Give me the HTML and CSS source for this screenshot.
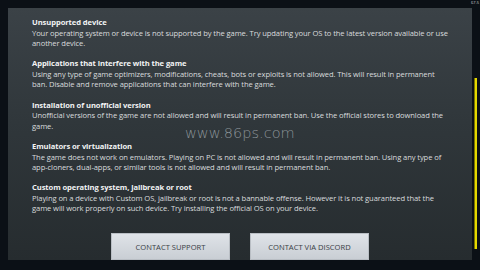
FILE: index.html
```html
<!DOCTYPE html>
<html>
<head>
<meta charset="utf-8">
<link rel="stylesheet" href="styles.css">
</head>
<body>
<div class="screen">
  <div class="corner">67.5</div>
  <div class="panel">
    <div class="content">
      <section class="item">
        <h3>Unsupported device</h3>
        <p>Your operating system or device is not supported by the game. Try updating your OS to the latest version available or use another device.</p>
      </section>
      <section class="item">
        <h3>Applications that interfere with the game</h3>
        <p>Using any type of game optimizers, modifications, cheats, bots or exploits is not allowed. This will result in permanent ban. Disable and remove applications that can interfere with the game.</p>
      </section>
      <section class="item">
        <h3>Installation of unofficial version</h3>
        <p>Unofficial versions of the game are not allowed and will result in permanent ban. Use the official stores to download the game.</p>
      </section>
      <section class="item">
        <h3>Emulators or virtualization</h3>
        <p>The game does not work on emulators. Playing on PC is not allowed and will result in permanent ban. Using any type of app-cloners, dual-apps, or similar tools is not allowed and will result in permanent ban.</p>
      </section>
      <section class="item">
        <h3>Custom operating system, jailbreak or root</h3>
        <p>Playing on a device with Custom OS, jailbreak or root is not a bannable offense. However it is not guaranteed that the game will work properly on such device. Try installing the official OS on your device.</p>
      </section>
    </div>
    <div class="actions">
      <button class="btn">CONTACT SUPPORT</button>
      <button class="btn">CONTACT VIA DISCORD</button>
    </div>
    <div class="watermark">www.86ps.com</div>
  </div>
  <div class="scrollbar"><div class="thumb"></div></div>
</div>
</body>
</html>
```
FILE: styles.css
```css
* { box-sizing: border-box; }
html, body { margin: 0; padding: 0; }
body {
  width: 480px;
  height: 270px;
  overflow: hidden;
  background: #0b1016;
  font-family: "Open Sans", "Noto Sans", sans-serif;
}
.screen {
  position: relative;
  width: 480px;
  height: 270px;
  padding: 8px 8px 10px 8px;
  display: flex;
}
.corner {
  position: absolute;
  right: 1px;
  top: 0;
  font-size: 4px;
  color: #c8ccd0;
  line-height: 6px;
}
.panel {
  position: relative;
  flex: 1;
  display: flex;
  flex-direction: column;
  background: linear-gradient(180deg, #3b4247 0%, #30373b 45%, #262c2f 100%);
  padding: 9px 24px 0 24px;
}
.content { flex: 1; }
.item { margin: 0 0 10px 0; }
.item h3 {
  margin: 0 0 0.5px 0;
  font-size: 7.6px;
  line-height: 10.25px;
  font-weight: 700;
  color: #f2f3f4;
  letter-spacing: -0.08px;
}
.item p {
  margin: 0;
  font-size: 7.6px;
  line-height: 10.25px;
  color: #d9dcde;
  letter-spacing: -0.1px;
}
.actions {
  display: flex;
  justify-content: center;
  gap: 20px;
}
.btn {
  width: 119px;
  height: 27px;
  border: 1px solid #b9bec4;
  background: linear-gradient(180deg, #dfe3e8 0%, #c9ced4 100%);
  color: #3a4046;
  font-family: "Open Sans", "Noto Sans", sans-serif;
  font-size: 7.6px;
  padding: 0;
}
.watermark {
  position: absolute;
  left: 177px;
  top: 117px;
  font-size: 14.5px;
  color: #8c9499;
  letter-spacing: 0;
  font-family: "DejaVu Sans", sans-serif;
  font-weight: 300;
}
.scrollbar {
  position: absolute;
  left: 474px;
  top: 78px;
  width: 3px;
  height: 171px;
}
.thumb {
  width: 3px;
  height: 100%;
  background: #e4d800;
  border-left: 1px solid #7a7200;
}
```
